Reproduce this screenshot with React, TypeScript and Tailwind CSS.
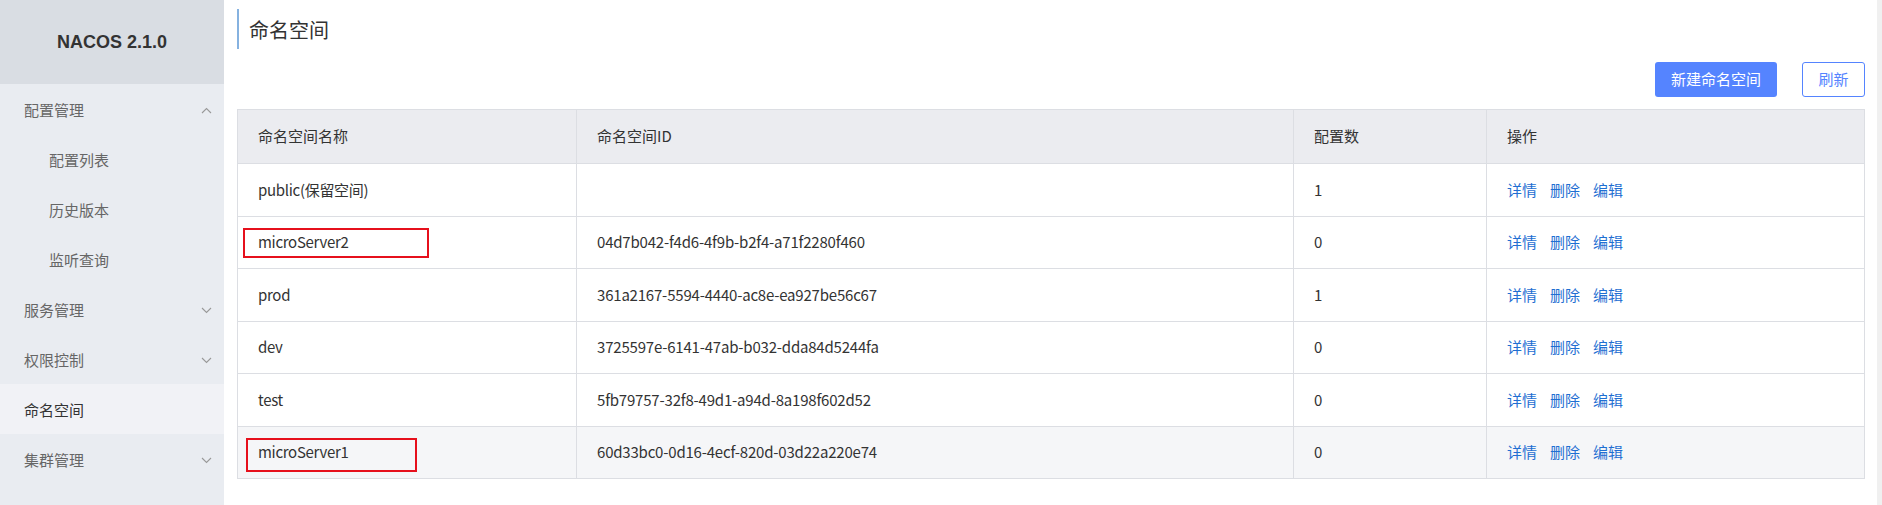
import React from "react"

const font = { fontFamily: '"Noto Sans CJK SC", "Noto Sans", sans-serif' }

function Chevron({ up }: { up?: boolean }) {
  return (
    <svg width="11" height="7" viewBox="0 0 11 7" className="text-[#999]">
      <polyline
        points={up ? "1,6 5.5,1.5 10,6" : "1,1 5.5,5.5 10,1"}
        fill="none"
        stroke="currentColor"
        strokeWidth="1.1"
      />
    </svg>
  )
}

const menu = [
  { label: "配置管理", chevron: "up" },
  { label: "配置列表", sub: true },
  { label: "历史版本", sub: true },
  { label: "监听查询", sub: true },
  { label: "服务管理", chevron: "down" },
  { label: "权限控制", chevron: "down" },
  { label: "命名空间", active: true },
  { label: "集群管理", chevron: "down" },
]

const rows = [
  { name: "public(保留空间)", id: "", count: "1" },
  { name: "microServer2", id: "04d7b042-f4d6-4f9b-b2f4-a71f2280f460", count: "0", mark: "a" },
  { name: "prod", id: "361a2167-5594-4440-ac8e-ea927be56c67", count: "1" },
  { name: "dev", id: "3725597e-6141-47ab-b032-dda84d5244fa", count: "0" },
  { name: "test", id: "5fb79757-32f8-49d1-a94d-8a198f602d52", count: "0" },
  { name: "microServer1", id: "60d33bc0-0d16-4ecf-820d-03d22a220e74", count: "0", mark: "b", hover: true },
]

const cols = "grid grid-cols-[339px_717px_193px_1fr]"

export default function App() {
  return (
    <div className="flex h-[505px] w-[1882px] bg-white text-[15px] text-[#333]" style={font}>
      {/* 侧边栏 */}
      <aside className="w-[224px] shrink-0 bg-[#e9ecf1]">
        <div className="flex h-[84px] items-center justify-center bg-[#d9dde3]">
          <span className="text-[18px] font-bold text-[#333]" style={{ fontFamily: '"Liberation Sans", sans-serif' }}>
            NACOS 2.1.0
          </span>
        </div>
        <nav>
          {menu.map((m) => (
            <div
              key={m.label}
              className={
                "flex h-[50px] items-center justify-between pr-[12px] pt-[2px] " +
                (m.sub ? "pl-[49px] " : "pl-[24px] ") +
                (m.active ? "bg-[#f1f2f6] text-[#333]" : "text-[#666]")
              }
            >
              <span>{m.label}</span>
              {m.chevron && <Chevron up={m.chevron === "up"} />}
            </div>
          ))}
        </nav>
      </aside>

      {/* 内容区 */}
      <main className="flex-1 pl-[13px] pr-[12px]">
        <div className="mt-[9px] flex h-[40px] items-center border-l-2 border-[#86b2e0] pl-[10px] pt-[1px] text-[20px] text-[#333]">
          命名空间
        </div>

        <div className="mt-[13px] flex justify-end gap-[25px]">
          <button className="h-[35px] w-[122px] rounded-[3px] bg-[#5584ff] text-white">新建命名空间</button>
          <button className="h-[35px] w-[63px] rounded-[3px] border border-[#5584ff] bg-white text-[#5584ff]">刷新</button>
        </div>

        <div className="mt-[12px] border-x border-t border-[#dcdee3]">
          <div className={cols + " h-[54px] border-b border-[#dcdee3] bg-[#ebecf0]"}>
            {["命名空间名称", "命名空间ID", "配置数", "操作"].map((h, i) => (
              <div key={h} className={"flex items-center pl-[20px] " + (i < 3 ? "border-r border-[#dcdee3]" : "")}>
                {h}
              </div>
            ))}
          </div>
          {rows.map((r) => (
            <div
              key={r.name}
              className={cols + " h-[52.5px] border-b border-[#dcdee3] " + (r.hover ? "bg-[#f5f6f8]" : "bg-white")}
            >
              <div className="relative flex items-center border-r border-[#dcdee3] pl-[20px] tracking-[-0.3px]">
                {r.name}
                {r.mark === "a" && (
                  <div className="absolute left-[5px] top-[11px] h-[30px] w-[186px] border-2 border-[#e6101c]" />
                )}
                {r.mark === "b" && (
                  <div className="absolute left-[8px] top-[11px] h-[34px] w-[171px] border-2 border-[#e6101c]" />
                )}
              </div>
              <div className="flex items-center border-r border-[#dcdee3] pl-[20px] tracking-[-0.2px]">{r.id}</div>
              <div className="flex items-center border-r border-[#dcdee3] pl-[20px]">{r.count}</div>
              <div className="flex items-center gap-[13px] pl-[20px] text-[#1f6fd2]">
                <a>详情</a>
                <a>删除</a>
                <a>编辑</a>
              </div>
            </div>
          ))}
        </div>
      </main>

      {/* 滚动条 */}
      <div className="w-[5px] shrink-0 bg-[#f0f0f0]" />
    </div>
  )
}
